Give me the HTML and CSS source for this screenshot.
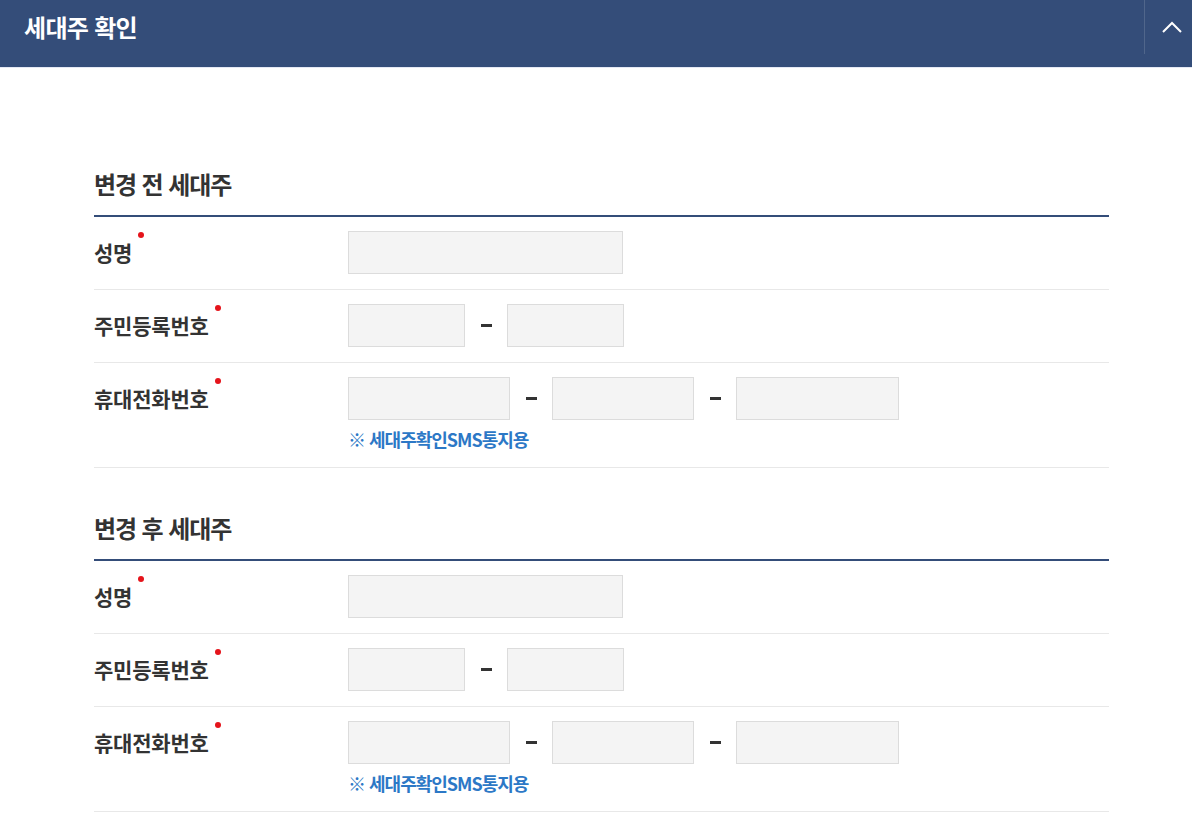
FILE: index.html
```html
<!DOCTYPE html>
<html lang="ko">
<head>
<meta charset="utf-8">
<title>세대주 확인</title>
<link rel="stylesheet" href="styles.css">
</head>
<body>
<header class="panel-head">
  <h1 class="panel-title">세대주 확인</h1>
  <button class="panel-toggle" type="button" aria-label="접기">
    <svg width="22" height="14" viewBox="0 0 22 14"><path d="M2 12 L11 3 L20 12" fill="none" stroke="#fff" stroke-width="2"/></svg>
  </button>
</header>

<main class="content">
  <section class="group">
    <h2 class="group-title">변경 전 세대주</h2>
    <div class="row">
      <div class="label"><span class="req">성명</span></div>
      <div class="field"><div class="inputs"><input class="inp w-name" type="text"></div></div>
    </div>
    <div class="row">
      <div class="label"><span class="req">주민등록번호</span></div>
      <div class="field"><div class="inputs"><input class="inp w-jumin" type="text"><span class="dash"></span><input class="inp w-jumin" type="text"></div></div>
    </div>
    <div class="row">
      <div class="label"><span class="req">휴대전화번호</span></div>
      <div class="field">
        <div class="inputs"><input class="inp w-p1" type="text"><span class="dash"></span><input class="inp w-p2" type="text"><span class="dash"></span><input class="inp w-p3" type="text"></div>
        <p class="note">※ 세대주확인SMS통지용</p>
      </div>
    </div>
  </section>

  <section class="group group-second">
    <h2 class="group-title">변경 후 세대주</h2>
    <div class="row">
      <div class="label"><span class="req">성명</span></div>
      <div class="field"><div class="inputs"><input class="inp w-name" type="text"></div></div>
    </div>
    <div class="row">
      <div class="label"><span class="req">주민등록번호</span></div>
      <div class="field"><div class="inputs"><input class="inp w-jumin" type="text"><span class="dash"></span><input class="inp w-jumin" type="text"></div></div>
    </div>
    <div class="row">
      <div class="label"><span class="req">휴대전화번호</span></div>
      <div class="field">
        <div class="inputs"><input class="inp w-p1" type="text"><span class="dash"></span><input class="inp w-p2" type="text"><span class="dash"></span><input class="inp w-p3" type="text"></div>
        <p class="note">※ 세대주확인SMS통지용</p>
      </div>
    </div>
  </section>
</main>
</body>
</html>
```

FILE: styles.css
```css
* { box-sizing: border-box; }
html, body { margin: 0; padding: 0; background: #fff; }
body {
  font-family: "Noto Sans CJK KR", "Noto Sans", sans-serif;
  color: #333;
}

.panel-head {
  height: 68px;
  background: #344d79;
  display: flex;
  align-items: flex-start;
  justify-content: space-between;
  border-bottom: 1px solid #e4e8f4;
}
.panel-title {
  margin: 0;
  padding-left: 24px;
  height: 54px;
  line-height: 54px;
  font-size: 24px;
  font-weight: 700;
  letter-spacing: -0.7px;
  color: #fff;
}
.panel-toggle {
  width: 48px;
  height: 54px;
  padding: 0 0 0 6px;
  margin: 0;
  background: none;
  border: 0;
  border-left: 1px solid rgba(255,255,255,0.14);
  display: flex;
  align-items: center;
  justify-content: center;
  cursor: pointer;
}

.content {
  padding: 100px 83px 0 94px;
}
.group-second { margin-top: 44px; }

.group-title {
  margin: 0;
  height: 49px;
  line-height: 32px;
  padding-bottom: 15px;
  font-size: 24px;
  font-weight: 700;
  letter-spacing: -1.1px;
  color: #333;
  border-bottom: 2px solid #344d79;
}

.row {
  display: flex;
  align-items: flex-start;
  padding: 14px 0 15px;
  border-bottom: 1px solid #e8e8e8;
}
.label {
  width: 254px;
  flex: none;
  height: 43px;
  line-height: 43px;
  font-size: 21px;
  font-weight: 700;
  letter-spacing: -0.2px;
  color: #333;
}
.req { position: relative; }
.req::after {
  content: "";
  position: absolute;
  right: -12px;
  top: -5px;
  width: 6px;
  height: 6px;
  border-radius: 50%;
  background: #e5141b;
}

.field { display: flex; flex-direction: column; }
.inputs { display: flex; align-items: center; }
.inp {
  height: 43px;
  margin: 0;
  padding: 0 10px;
  background: #f4f4f4;
  border: 1px solid #dcdcdc;
  border-radius: 0;
  font-family: inherit;
  font-size: 16px;
  outline: none;
}
.w-name { width: 275px; }
.w-jumin { width: 117px; }
.w-p1 { width: 162px; }
.w-p2 { width: 142px; }
.w-p3 { width: 163px; }

.dash {
  width: 42px;
  display: flex;
  justify-content: center;
}
.dash::before {
  content: "";
  width: 11px;
  height: 3px;
  background: #333;
}

.note {
  margin: 7px 0 0;
  line-height: 24px;
  height: 25px;
  font-size: 18px;
  font-weight: 700;
  letter-spacing: -1px;
  color: #2c78c6;
}
```
